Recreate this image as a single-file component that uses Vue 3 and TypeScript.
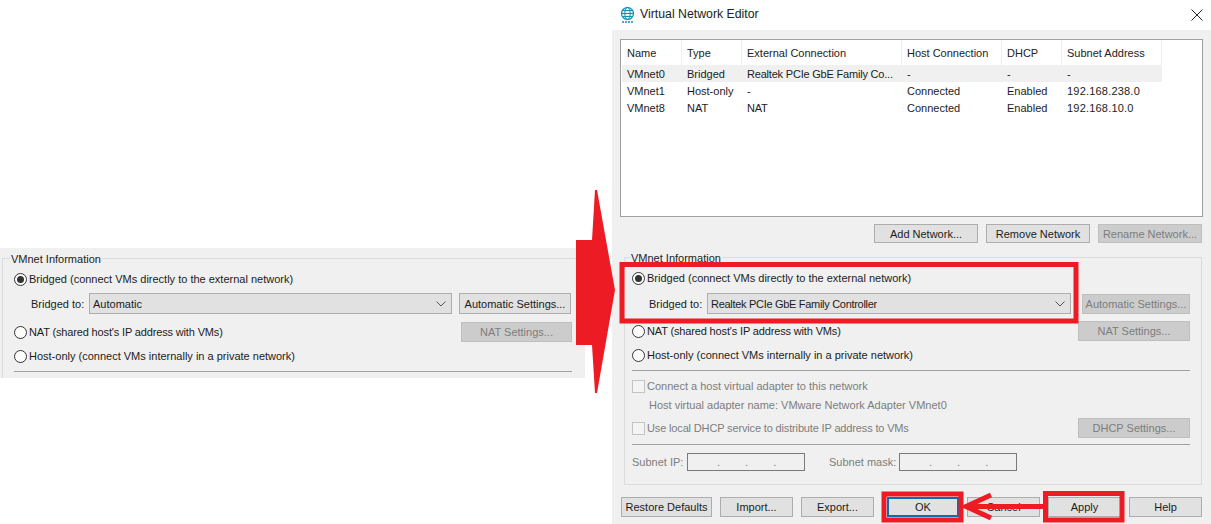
<script setup lang="ts">
const columns: string[] = ['Name', 'Type', 'External Connection', 'Host Connection', 'DHCP', 'Subnet Address']
const rows: string[][] = [
  ['VMnet0', 'Bridged', 'Realtek PCIe GbE Family Co...', '-', '-', '-'],
  ['VMnet1', 'Host-only', '-', 'Connected', 'Enabled', '192.168.238.0'],
  ['VMnet8', 'NAT', 'NAT', 'Connected', 'Enabled', '192.168.10.0'],
]
</script>

<template>
  <div class="page">
    <section class="left">
      <div class="group group-left">
        <div class="legend">VMnet Information</div>
        <div class="row r-h20 mt3"><span class="radio on"></span><span class="lbl">Bridged (connect VMs directly to the external network)</span></div>
        <div class="row mt4">
          <span class="to to-left">Bridged to:</span>
          <div class="select sel-left">
            <span>Automatic</span>
            <svg width="10" height="6" viewBox="0 0 10 6"><path d="M.5.5 5 5 9.500.5" fill="none" stroke="#555" /></svg>
          </div>
          <button class="btn w-auto-left ml7">Automatic Settings...</button>
        </div>
        <div class="row r-h20 mt8 between">
          <div class="row"><span class="radio"></span><span class="lbl tight">NAT (shared host's IP address with VMs)</span></div>
          <button class="btn off w-nat-left">NAT Settings...</button>
        </div>
        <div class="row r-h20 mt4"><span class="radio"></span><span class="lbl">Host-only (connect VMs internally in a private network)</span></div>
        <div class="sep sep-left"></div>
      </div>
    </section>

    <section class="dialog">
      <header class="titlebar">
        <div class="row">
          <svg class="globe" width="15" height="16" viewBox="0 0 15 16">
            <circle cx="7.500" cy="6.500" r="6" fill="#e6f6fa" stroke="#1b8fb0" stroke-width="1.200" />
            <ellipse cx="7.500" cy="6.500" rx="2.700" ry="6" fill="none" stroke="#1b8fb0" />
            <path d="M1.500 6.500h12M2.500 3.500h10M2.500 9.500h10" stroke="#1b8fb0" fill="none" />
            <path d="M2 15h11" stroke="#1b8fb0" stroke-width="1.500" stroke-dasharray="2 1" />
          </svg>
          <span class="title">Virtual Network Editor</span>
        </div>
        <svg class="close" width="12" height="12" viewBox="0 0 12 12"><path d="M.5.5l11 11M11.500.5l-11 11" stroke="#222" stroke-width="1" fill="none" /></svg>
      </header>

      <div class="body">
        <div class="table">
          <div class="tr thead">
            <div v-for="c in columns" :key="c" class="cell">{{ c }}</div>
          </div>
          <div v-for="(r, i) in rows" :key="r[0]" class="tr trow" :class="{ selected: i === 0 }">
            <div v-for="(v, j) in r" :key="j" class="cell">{{ v }}</div>
          </div>
        </div>

        <div class="row netbtns">
          <button class="btn w-net">Add Network...</button>
          <button class="btn w-net">Remove Network</button>
          <button class="btn off w-net">Rename Network...</button>
        </div>

        <div class="group group-right">
          <div class="legend">VMnet Information</div>
          <div class="row r-h20 mt3"><span class="radio on"></span><span class="lbl">Bridged (connect VMs directly to the external network)</span></div>
          <div class="row mt5">
            <span class="to to-right">Bridged to:</span>
            <div class="select sel-right">
              <span class="tighter">Realtek PCIe GbE Family Controller</span>
              <svg width="10" height="6" viewBox="0 0 10 6"><path d="M.5.5 5 5 9.500.5" fill="none" stroke="#555" /></svg>
            </div>
            <button class="btn off w-auto-right ml11">Automatic Settings...</button>
          </div>
          <div class="row r-h20 mt7 between">
            <div class="row"><span class="radio"></span><span class="lbl tight">NAT (shared host's IP address with VMs)</span></div>
            <button class="btn off w-112">NAT Settings...</button>
          </div>
          <div class="row r-h20 mt4"><span class="radio"></span><span class="lbl">Host-only (connect VMs internally in a private network)</span></div>
          <div class="sep mt5"></div>
          <div class="row r-h20 mt5"><span class="check"></span><span class="lbl dim">Connect a host virtual adapter to this network</span></div>
          <div class="row r-h20 hostname dim">Host virtual adapter name: VMware Network Adapter VMnet0</div>
          <div class="row r-h20 mt3 between">
            <div class="row"><span class="check"></span><span class="lbl dim tight">Use local DHCP service to distribute IP address to VMs</span></div>
            <button class="btn off w-112">DHCP Settings...</button>
          </div>
          <div class="sep mt6"></div>
          <div class="row subnet">
            <span class="dim w-subnet-ip">Subnet IP:</span>
            <div class="ip"><span>.</span><span>.</span><span>.</span></div>
            <span class="dim w-subnet-mask">Subnet mask:</span>
            <div class="ip"><span>.</span><span>.</span><span>.</span></div>
          </div>
        </div>

        <div class="row footer">
          <button class="btn w-restore">Restore Defaults</button>
          <button class="btn w-foot">Import...</button>
          <button class="btn w-foot">Export...</button>
          <button class="btn w-ok primary">OK</button>
          <button class="btn w-foot">Cancel</button>
          <button class="btn w-foot">Apply</button>
          <button class="btn w-foot">Help</button>
        </div>
      </div>
    </section>

    <svg class="overlay" width="1211" height="524" viewBox="0 0 1211 524">
      <path d="M576 240H592L595 190L597 190L615 290L597 393H595L592 345H576Z" fill="#ed1c24" />
      <g fill="none" stroke="#ed1c24" stroke-width="5">
        <rect x="622" y="264.500" width="454" height="56.500" />
        <rect x="884" y="494" width="77" height="26" />
        <rect x="1045.500" y="493.500" width="76.500" height="26.500" />
      </g>
      <path d="M1045 506.500H968M991 495 966 506.500 991 518" fill="none" stroke="#ed1c24" stroke-width="5" />
    </svg>
  </div>
</template>

<style scoped>
.page {
  position: relative;
  display: flex;
  width: 1211px;
  height: 524px;
  overflow: hidden;
  background: #fff;
  font-family: "Liberation Sans", Arial, sans-serif;
  font-size: 11px;
  color: #1c1c1c;
}
.left {
  width: 585px;
  height: 130px;
  margin-top: 248px;
  padding-top: 10px;
  box-sizing: border-box;
  background: #f0f0f0;
  flex: none;
}
.dialog {
  width: 599px;
  margin-left: 27px;
  flex: none;
  display: flex;
  flex-direction: column;
}
.titlebar {
  height: 30px;
  flex: none;
  display: flex;
  align-items: center;
  justify-content: space-between;
  padding: 0 8px 2px 8px;
  box-sizing: border-box;
}
.globe { margin-right: 5px; margin-top: 1px; }
.title { font-size: 12.300px; color: #222; }
.close { margin-top: 1px; }
.body {
  flex: 1;
  background: #f0f0f0;
  padding: 9px 8px 0 8px;
}
.table {
  width: 583px;
  height: 178px;
  box-sizing: border-box;
  background: #fff;
  border: 1px solid #a0a0a0;
  padding-left: 1px;
}
.tr {
  display: grid;
  grid-template-columns: 60px 60px 160px 100px 60px 100px;
  width: 540px;
}
.cell {
  padding-left: 5px;
  white-space: nowrap;
  overflow: hidden;
}
.thead .cell {
  height: 25px;
  line-height: 27px;
  border-right: 1px solid #eee;
  color: #222;
}
.trow .cell { height: 17px; line-height: 19px; }
.trow .cell:nth-child(3) { letter-spacing: -0.2px; }
.trow .cell:nth-child(6) { letter-spacing: 0.2px; }
.selected { background: #f0f0f0; }
.row { display: flex; align-items: center; }
.between { justify-content: space-between; }
.r-h20 { height: 20px; }
.mt3 { margin-top: 3px; }
.mt4 { margin-top: 4px; }
.mt5 { margin-top: 5px; }
.mt6 { margin-top: 6px; }
.mt7 { margin-top: 7px; }
.mt8 { margin-top: 8px; }
.ml7 { margin-left: 7px; }
.ml11 { margin-left: 11px; }
.tight { letter-spacing: -0.15px; }
.tighter { letter-spacing: -0.3px; }
.netbtns {
  justify-content: flex-end;
  gap: 8px;
  margin-top: 7px;
  margin-right: 1px;
}
.group {
  box-sizing: border-box;
  border-top: 1px solid #dcdcdc;
  border-left: 1px solid #dcdcdc;
}
.group-left {
  margin-left: 2px;
  padding: 0 13px 0 11px;
  height: 120px;
}
.group-right {
  width: 578px;
  height: 228px;
  margin: 14px 0 0 4px;
  padding: 0 11px 0 7px;
  border: 1px solid #dcdcdc;
}
.legend {
  width: fit-content;
  height: 14px;
  line-height: 14px;
  margin: -7px 0 0 -4px;
  padding: 0 1px;
  background: #f0f0f0;
  color: #222;
}
.group-right .legend { margin-left: -2px; }
.radio {
  width: 13px;
  height: 13px;
  box-sizing: border-box;
  border: 1px solid #333;
  border-radius: 50%;
  background: #fff;
  flex: none;
  position: relative;
}
.radio.on::after {
  content: "";
  position: absolute;
  inset: 2px;
  border-radius: 50%;
  background: #333;
}
.check {
  width: 13px;
  height: 13px;
  box-sizing: border-box;
  border: 1px solid #c4c4c4;
  background: #f4f4f4;
  flex: none;
}
.lbl { margin-left: 2px; white-space: nowrap; }
.dim { color: #7d7d7d; white-space: nowrap; }
.to { white-space: nowrap; }
.to-left { margin-left: 17px; width: 58px; }
.to-right { margin-left: 17px; width: 58px; }
.select {
  box-sizing: border-box;
  height: 21px;
  display: flex;
  align-items: center;
  justify-content: space-between;
  padding: 0 5px 0 3px;
  background: #e1e1e1;
  border: 1px solid #adadad;
}
.sel-left { width: 363px; }
.sel-right { width: 364px; }
.btn {
  box-sizing: border-box;
  height: 20px;
  padding: 0;
  font: inherit;
  color: #1c1c1c;
  background: #e1e1e1;
  border: 1px solid #adadad;
  white-space: nowrap;
  flex: none;
}
.off {
  background: #ccc;
  border-color: #bfbfbf;
  color: #7d7d7d;
}
.primary {
  border: 2px solid #0a6bb8;
}
.w-auto-left { width: 112px; height: 21px; }
.w-nat-left { width: 111px; }
.w-auto-right { width: 108px; }
.w-112 { width: 112px; }
.w-net { width: 104px; height: 19px; }
.w-restore { width: 91px; }
.w-foot { width: 73px; }
.w-ok { width: 72px; margin-left: 5px; }
.sep {
  height: 1px;
  background: #a0a0a0;
}
.sep-left { margin-top: 5px; }
.hostname { padding-left: 17px; margin-top: -1px; }
.subnet { margin-top: 8px; height: 18px; }
.w-subnet-ip { width: 55px; }
.w-subnet-mask { width: 70px; margin-left: 24px; }
.ip {
  box-sizing: border-box;
  width: 118px;
  height: 18px;
  border: 1px solid #7a7a7a;
  display: flex;
  gap: 25px;
  padding: 0 0 0 29px;
  line-height: 17px;
  color: #7d7d7d;
}
.footer {
  gap: 8px;
  margin-top: 12px;
  margin-left: 1px;
}
.overlay {
  position: absolute;
  left: 0;
  top: 0;
  pointer-events: none;
}
</style>

<style>
html, body { margin: 0; padding: 0; overflow: hidden; background: #fff; }
</style>
